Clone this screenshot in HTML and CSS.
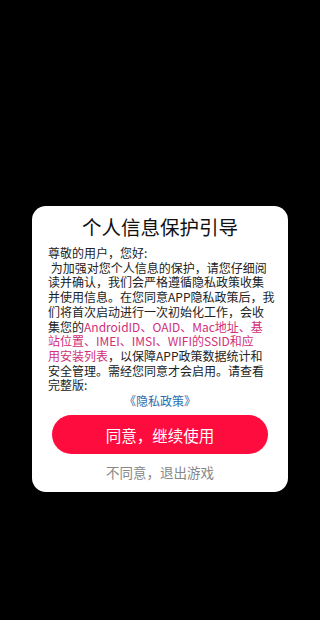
FILE: index.html
```html
<!DOCTYPE html>
<html lang="zh-CN">
<head>
    <meta charset="UTF-8">
    <meta name="viewport" content="width=device-width, initial-scale=1.0">
    <title>个人信息保护引导</title>
    <link rel="stylesheet" href="styles.css">
</head>
<body>
    <div id="dialog">
        <div class="dialog_title">个人信息保护引导</div>
        <div class="dialog_body">
            尊敬的用户，您好:<br>
            &nbsp;为加强对您个人信息的保护，请您仔细阅<br>
            读并确认，我们会严格遵循隐私政策收集<br>
            并使用信息。在您同意APP隐私政策后，我<br>
            们将首次启动进行一次初始化工作，会收<br>
            集您的<span class="highlight">AndroidID、OAID、Mac地址、基<br>
            站位置、IMEI、IMSI、WIFI的SSID和应<br>
            用安装列表</span>，以保障APP政策数据统计和<br>
            安全管理。需经您同意才会启用。请查看<br>
            完整版:
        </div>
        <a class="policy_link" href="#">《隐私政策》</a>
        <button class="agree_button">同意，继续使用</button>
        <div class="refuse_text">不同意，退出游戏</div>
    </div>
</body>
</html>
```

FILE: styles.css
```css
body{
    margin:0; padding:206px 0 0 0;
    background-color:#000;
    font-family:"Noto Sans CJK SC", "Noto Sans", sans-serif;
}
#dialog{
    width:256px;
    margin:0 auto;
    box-sizing:border-box;
    background-color:#fff;
    border-radius:14px;
    padding:8px 0 10px 0;
    display:flex;
    flex-direction:column;
    align-items:center;
}
.dialog_title{
    font-size:19.5px;
    line-height:26px;
    color:#111;
    margin-bottom:6px;
}
.dialog_body{
    align-self:stretch;
    padding:0 6px 0 16px;
    font-size:12px;
    line-height:14.7px;
    color:#222;
    white-space:nowrap;
}
.highlight{
    color:#d0307a;
}
.policy_link{
    font-size:12px;
    line-height:15px;
    color:#2a6db0;
    text-decoration:none;
    margin-top:0;
}
.agree_button{
    width:216px;
    height:39px;
    margin-top:7px;
    border:none;
    border-radius:20px;
    background-color:#ff0c3e;
    color:#fff;
    font-family:inherit;
    font-size:15.5px;
}
.refuse_text{
    margin-top:8px;
    font-size:13.5px;
    line-height:20px;
    color:#888;
}
```
